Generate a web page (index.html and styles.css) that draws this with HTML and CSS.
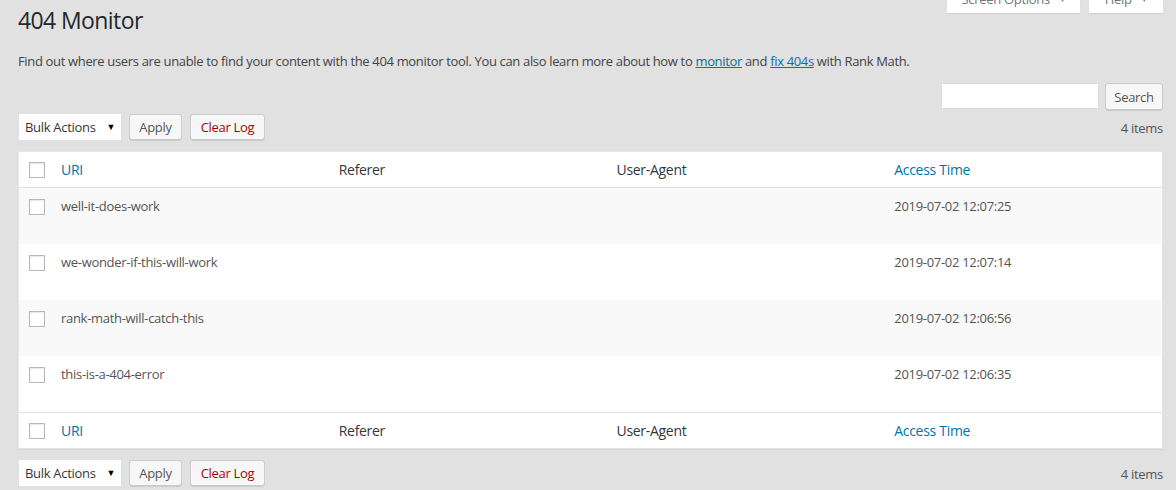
FILE: index.html
```html
<!DOCTYPE html>
<html>
<head>
<meta charset="utf-8">
<link rel="stylesheet" href="styles.css">
</head>
<body>
<div class="wrap">
  <div class="header">
    <h1 class="title">404 Monitor</h1>
    <div class="meta-links">
      <button class="meta-tab tab-options">Screen Options <span class="caret">▼</span></button>
      <button class="meta-tab tab-help">Help <span class="caret">▼</span></button>
    </div>
  </div>
  <p class="desc">Find out where users are unable to find your content with the 404 monitor tool. You can also learn more about how to <a href="#">monitor</a> and <a href="#">fix 404s</a> with Rank Math.</p>
  <div class="search-box">
    <input class="search-input" type="text">
    <button class="btn btn-search">Search</button>
  </div>
  <div class="tablenav tablenav-top">
    <div class="actions">
      <div class="select">Bulk Actions <span class="sel-caret">▼</span></div>
      <button class="btn btn-apply">Apply</button>
      <button class="btn btn-clear">Clear Log</button>
    </div>
    <div class="count">4 items</div>
  </div>
  <table class="list">
    <thead>
      <tr class="head-row">
        <th class="cb"><span class="check"></span></th>
        <th class="col link">URI</th>
        <th class="col">Referer</th>
        <th class="col">User-Agent</th>
        <th class="col link">Access Time</th>
      </tr>
    </thead>
    <tbody>
      <tr class="row alt">
        <td class="cb"><span class="check"></span></td>
        <td>well-it-does-work</td><td></td><td></td><td>2019-07-02 12:07:25</td>
      </tr>
      <tr class="row">
        <td class="cb"><span class="check"></span></td>
        <td>we-wonder-if-this-will-work</td><td></td><td></td><td>2019-07-02 12:07:14</td>
      </tr>
      <tr class="row alt">
        <td class="cb"><span class="check"></span></td>
        <td>rank-math-will-catch-this</td><td></td><td></td><td>2019-07-02 12:06:56</td>
      </tr>
      <tr class="row">
        <td class="cb"><span class="check"></span></td>
        <td>this-is-a-404-error</td><td></td><td></td><td>2019-07-02 12:06:35</td>
      </tr>
    </tbody>
    <tfoot>
      <tr class="foot-row">
        <th class="cb"><span class="check"></span></th>
        <th class="col link">URI</th>
        <th class="col">Referer</th>
        <th class="col">User-Agent</th>
        <th class="col link">Access Time</th>
      </tr>
    </tfoot>
  </table>
  <div class="tablenav tablenav-bottom">
    <div class="actions">
      <div class="select">Bulk Actions <span class="sel-caret">▼</span></div>
      <button class="btn btn-apply">Apply</button>
      <button class="btn btn-clear">Clear Log</button>
    </div>
    <div class="count">4 items</div>
  </div>
</div>
</body>
</html>
```
FILE: styles.css
```css
html, body {
  margin: 0;
  padding: 0;
  background: #e1e1e1;
}
body {
  font-family: "Open Sans", "Noto Sans", sans-serif;
  font-size: 13px;
  letter-spacing: -0.3px;
  color: #444;
}
.wrap {
  padding: 0 13px 0 18px;
}
.header {
  display: flex;
  justify-content: space-between;
  align-items: flex-start;
  height: 40px;
}
.title {
  margin: 6px 0 0 0;
  font-size: 23px;
  font-weight: 400;
  letter-spacing: -0.6px;
  color: #23282d;
  line-height: 29px;
}
.meta-links {
  display: flex;
  gap: 9px;
  margin-top: -15px;
}
.meta-tab {
  height: 28px;
  background: #fff;
  border: none;
  box-shadow: 0 1px 1px rgba(0,0,0,0.06);
  font-family: inherit;
  font-size: 13px;
  letter-spacing: -0.3px;
  color: #72777c;
  padding: 0;
  line-height: 28px;
  white-space: nowrap;
  text-align: center;
}
.tab-options { width: 133px; }
.tab-help { width: 74px; }
.caret {
  font-size: 7px;
  margin-left: 6px;
  vertical-align: 2px;
}
.desc {
  margin: 11px 0 0 0;
  line-height: 20px;
  letter-spacing: -0.34px;
}
.desc a {
  color: #0073aa;
}
.search-box {
  display: flex;
  justify-content: flex-end;
  gap: 6px;
  margin-top: 12px;
}
.search-input {
  width: 158px;
  height: 26px;
  box-sizing: border-box;
  border: 1px solid #ddd;
  background: #fff;
  margin: 0;
}
.btn {
  font-family: inherit;
  font-size: 13px;
  letter-spacing: -0.3px;
  height: 26px;
  box-sizing: border-box;
  background: #f7f7f7;
  border: 1px solid #ccc;
  border-radius: 3px;
  box-shadow: 0 1px 0 #ccc;
  color: #555;
  padding: 0;
  line-height: 24px;
  margin: 0;
  white-space: nowrap;
  text-align: center;
}
.btn-search { width: 58px; height: 27px; }
.btn-apply { width: 53px; }
.btn-clear { width: 75px; color: #a00; }
.tablenav {
  display: flex;
  justify-content: space-between;
  align-items: center;
  height: 28px;
}
.tablenav-top { margin-top: 3px; }
.tablenav-bottom { margin-top: 10px; }
.actions {
  display: flex;
  align-items: center;
  gap: 8px;
  padding-left: 1px;
}
.select {
  width: 102px;
  height: 26px;
  box-sizing: border-box;
  background: #fff;
  padding: 0 6px;
  line-height: 26px;
  color: #32373c;
  display: flex;
  justify-content: space-between;
  align-items: center;
  white-space: nowrap;
}
.sel-caret { font-size: 9px; color: #000; }
.count {
  color: #555;
  padding-top: 2px;
}
.list {
  width: 100%;
  margin-top: 10px;
  border-collapse: separate;
  border-spacing: 0;
  background: #fff;
  border: 1px solid #e5e5e5;
  box-shadow: 0 1px 1px rgba(0,0,0,0.04);
  table-layout: fixed;
}
.list th, .list td {
  text-align: left;
  font-weight: 400;
  padding: 0 10px;
}
.list .cb {
  width: 22px;
  padding: 0 0 0 10px;
}
.check {
  display: block;
  width: 16px;
  height: 16px;
  box-sizing: border-box;
  border: 1px solid #b4b9be;
  background: #fff;
  box-shadow: inset 0 1px 2px rgba(0,0,0,0.1);
}
.head-row th, .foot-row th {
  height: 35px;
  font-size: 14px;
  color: #32373c;
}
.head-row th { border-bottom: 1px solid #e1e1e1; }
.foot-row th { border-top: 1px solid #e1e1e1; }
.list th.link { color: #0073aa; }
.row td {
  height: 56px;
  vertical-align: top;
  padding-top: 9px;
  padding-bottom: 0;
  box-sizing: border-box;
  color: #555;
}
.row td.cb { padding-top: 11px; }
.row.alt td { background: #f9f9f9; }
```
